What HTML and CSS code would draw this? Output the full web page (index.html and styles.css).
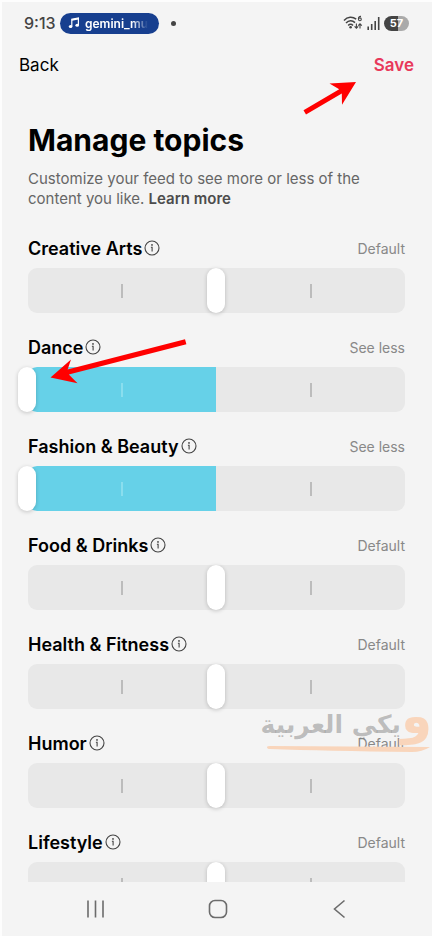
FILE: index.html
```html
<!DOCTYPE html>
<html lang="en">
<head>
<meta charset="utf-8">
<meta name="viewport" content="width=device-width, initial-scale=1">
<title>Manage topics</title>
<link rel="stylesheet" href="styles.css">
</head>
<body>
<svg class="symbols" aria-hidden="true">
  <symbol id="info" viewBox="0 0 16 16">
    <circle cx="8" cy="8" r="7" fill="none" stroke="currentColor" stroke-width="1.1"/>
    <circle cx="8" cy="4.9" r="0.9" fill="currentColor"/>
    <path d="M6.9 7.2H8.1V11.5" fill="none" stroke="currentColor" stroke-width="1.1"/>
  </symbol>
</svg>

<div class="status">
  <span class="clock">9:13</span>
  <span class="pill">
    <svg class="note" viewBox="0 0 12 12" aria-hidden="true">
      <path d="M3.8 9.2V2.2L10.4 1V8" fill="none" stroke="currentColor" stroke-width="1.2"/>
      <path d="M3.8 3L10.4 1.8" stroke="currentColor" stroke-width="1.6"/>
      <ellipse cx="2.6" cy="9.5" rx="1.8" ry="1.5" fill="currentColor"/>
      <ellipse cx="9.2" cy="8.3" rx="1.8" ry="1.5" fill="currentColor"/>
    </svg>
    <span class="pill-text">gemini_mu</span>
  </span>
  <span class="dot"></span>
  <span class="indicators">
    <svg class="wifi" viewBox="0 0 20 16" aria-label="Wi-Fi 6">
      <g fill="none" stroke="currentColor" stroke-width="1.5">
        <path d="M1 5.4C4.6 1.5 9.6 1.5 13.2 4.2"/>
        <path d="M3 8C5.8 5 9.4 5 12 7.6"/>
        <path d="M5.2 10.4C6.6 8.9 8.6 8.9 10 10.4"/>
        <path d="M13.4 8.6V13M11.6 11.3L13.4 13.2L15.2 11.3M17 13.6V9M15.2 10.6L17 8.8L18.8 10.6" stroke-width="1.1"/>
        <path d="M18 1.4C16.4 1.2 15.4 2.2 15.4 4.2" stroke-width="1.1"/>
        <circle cx="16.9" cy="4.3" r="1.4" stroke-width="1.1"/>
      </g>
      <circle cx="7.6" cy="12.3" r="1.3" fill="currentColor"/>
    </svg>
    <svg class="signal" viewBox="0 0 13 13" aria-label="Signal">
      <path d="M1.2 9.5V13M4.7 7V13M8.2 4V13M11.7 0V13" stroke="currentColor" stroke-width="1.6"/>
    </svg>
    <span class="battery">57</span>
  </span>
</div>

<header class="bar">
  <button class="back" type="button">Back</button>
  <button class="save" type="button">Save</button>
</header>

<main class="content">
  <h1>Manage topics</h1>
  <p class="intro">Customize your feed to see more or less of the content you like. <a href="#learn">Learn more</a></p>

  <section class="topic">
    <div class="topic-head"><label for="t1">Creative Arts</label><button class="info" type="button" aria-label="About Creative Arts"><svg><use href="#info"/></svg></button><output for="t1">Default</output></div>
    <div class="slider"><div class="track"><i></i><i></i></div><input id="t1" type="range" min="-2" max="2" value="0"></div>
  </section>
  <section class="topic less">
    <div class="topic-head"><label for="t2">Dance</label><button class="info" type="button" aria-label="About Dance"><svg><use href="#info"/></svg></button><output for="t2">See less</output></div>
    <div class="slider"><div class="track"><i></i><i></i></div><input id="t2" type="range" min="-2" max="2" value="-2"></div>
  </section>
  <section class="topic less">
    <div class="topic-head"><label for="t3">Fashion &amp; Beauty</label><button class="info" type="button" aria-label="About Fashion &amp; Beauty"><svg><use href="#info"/></svg></button><output for="t3">See less</output></div>
    <div class="slider"><div class="track"><i></i><i></i></div><input id="t3" type="range" min="-2" max="2" value="-2"></div>
  </section>
  <section class="topic">
    <div class="topic-head"><label for="t4">Food &amp; Drinks</label><button class="info" type="button" aria-label="About Food &amp; Drinks"><svg><use href="#info"/></svg></button><output for="t4">Default</output></div>
    <div class="slider"><div class="track"><i></i><i></i></div><input id="t4" type="range" min="-2" max="2" value="0"></div>
  </section>
  <section class="topic">
    <div class="topic-head"><label for="t5">Health &amp; Fitness</label><button class="info" type="button" aria-label="About Health &amp; Fitness"><svg><use href="#info"/></svg></button><output for="t5">Default</output></div>
    <div class="slider"><div class="track"><i></i><i></i></div><input id="t5" type="range" min="-2" max="2" value="0"></div>
  </section>
  <section class="topic">
    <div class="topic-head"><label for="t6">Humor</label><button class="info" type="button" aria-label="About Humor"><svg><use href="#info"/></svg></button><output for="t6">Default</output></div>
    <div class="slider"><div class="track"><i></i><i></i></div><input id="t6" type="range" min="-2" max="2" value="0"></div>
  </section>
  <section class="topic">
    <div class="topic-head"><label for="t7">Lifestyle</label><button class="info" type="button" aria-label="About Lifestyle"><svg><use href="#info"/></svg></button><output for="t7">Default</output></div>
    <div class="slider"><div class="track"><i></i><i></i></div><input id="t7" type="range" min="-2" max="2" value="0"></div>
  </section>
</main>

<nav class="system" aria-label="System">
  <button type="button" aria-label="Recent apps"><svg viewBox="0 0 20 20"><path d="M2 1.5V18.5M9.5 1.5V18.5M17 1.5V18.5"/></svg></button>
  <button type="button" aria-label="Home"><svg viewBox="0 0 20 20"><rect x="1.5" y="1.5" width="17" height="17" rx="5.5"/></svg></button>
  <button type="button" aria-label="Go back"><svg viewBox="0 0 20 20"><path d="M14.5 1.5L4.5 10L14.5 18.5"/></svg></button>
</nav>

<svg class="arrows" viewBox="0 0 432 400" aria-hidden="true">
  <path d="M303.5 110.2L339.2 89.2L329.5 83.6L356 82L342 104.8L341.8 93.6L306 114.6Z"/>
  <path d="M185 339.3L67.6 369.5L71 359.5L50.5 377.5L77.5 383.3L68.8 374.4L186.4 344.2Z"/>
</svg>

<div class="watermark" lang="ar" dir="rtl">
  <span class="wm-first">و</span><span class="wm-rest">يكي العربية</span>
  <svg class="wm-line" viewBox="0 0 166 8" preserveAspectRatio="none" aria-hidden="true"><path d="M1 2Q1 1 4 1L164 2Q156 7 146 7Q60 6 4 4Q1 4 1 2Z"/></svg>
</div>
</body>
</html>
```
FILE: styles.css
```css
* { box-sizing: border-box; }

body {
  margin: 0;
  height: 100vh;
  display: flex;
  flex-direction: column;
  position: relative;
  overflow: hidden;
  background: #f4f4f4;
  border-left: 2px solid #fdfdfd;
  border-top: 2px solid #fdfdfd;
  color: #000;
  font-family: Inter, "Liberation Sans", sans-serif;
}

button {
  border: 0;
  padding: 0;
  background: none;
  font: inherit;
  color: inherit;
}

.symbols {
  position: absolute;
  width: 0;
  height: 0;
}

.status {
  display: flex;
  align-items: center;
  height: 42px;
  padding: 0 23px 0 22px;
  color: #444;
}

.clock {
  width: 36px;
  font-size: 16px;
  font-weight: 500;
}

.pill {
  display: flex;
  align-items: center;
  gap: 5px;
  width: 99px;
  height: 21px;
  padding: 0 9px 0 8px;
  border-radius: 11px;
  background: #173f8f;
  color: #fff;
}

.note {
  width: 12px;
  height: 12px;
  flex: none;
}

.pill-text {
  overflow: hidden;
  font-size: 12px;
  font-weight: 600;
  mask-image: linear-gradient(to right, #000 75%, transparent);
}

.dot {
  width: 5px;
  height: 5px;
  margin-left: 12px;
  border-radius: 50%;
  background: #444;
}

.indicators {
  display: flex;
  align-items: center;
  gap: 4px;
  margin-left: auto;
}

.wifi {
  width: 20px;
  height: 16px;
}

.signal {
  width: 13px;
  height: 13px;
}

.battery {
  width: 25px;
  border-radius: 8px;
  background: linear-gradient(to right, #444 57%, #aaa 57%);
  color: #fff;
  font-size: 11px;
  font-weight: 700;
  line-height: 15px;
  text-align: center;
}

.bar {
  display: flex;
  justify-content: space-between;
  align-items: center;
  height: 42px;
  padding: 0 18px 0 17px;
  font-size: 17px;
}

.save {
  color: #e8395b;
  font-weight: 600;
}

.content {
  flex: 1;
  min-height: 0;
  overflow: hidden;
  padding: 34px 27px 0 26px;
}

h1 {
  margin: 0;
  font-size: 30px;
  font-weight: 700;
  line-height: 40px;
}

.intro {
  margin: 9px 0 28px;
  color: #666;
  font-size: 15px;
  line-height: 20px;
}

.intro a {
  color: #4c4c4c;
  font-weight: 600;
  text-decoration: none;
}

.topic {
  height: 99px;
}

.topic-head {
  display: flex;
  align-items: center;
  gap: 2px;
  height: 31px;
  padding-bottom: 9px;
  font-size: 18px;
  font-weight: 600;
}

.info {
  display: flex;
  color: #444;
}

.info svg {
  width: 16px;
  height: 16px;
}

output {
  margin-left: auto;
  color: #888;
  font-size: 14px;
  font-weight: 400;
}

.slider {
  display: grid;
}

.track {
  grid-area: 1 / 1;
  display: flex;
  justify-content: space-around;
  align-items: center;
  height: 45px;
  border-radius: 9px;
  background: #e8e8e8;
}

.track i {
  width: 2px;
  height: 14px;
  background: #bcbcbc;
}

.less .track {
  background: linear-gradient(to right, #66d1e8 50%, #e8e8e8 50%);
}

.less .track i:first-child {
  background: #8adeee;
}

.slider input {
  grid-area: 1 / 1;
  appearance: none;
  height: 45px;
  margin: 0 -9px 0 -10px;
  background: none;
}

.slider input::-webkit-slider-thumb {
  appearance: none;
  width: 18px;
  height: 45px;
  border-radius: 9px;
  background: #fff;
  box-shadow: 0 1px 4px rgba(0, 0, 0, 0.2);
}

.system {
  display: flex;
  justify-content: space-between;
  height: 54px;
  padding: 0 82px 0 84px;
}

.system svg {
  display: block;
  width: 20px;
  height: 20px;
  fill: none;
  stroke: #6c6c6c;
  stroke-width: 1.6;
}

.arrows {
  position: absolute;
  top: -2px;
  left: -2px;
  width: 432px;
  fill: #f00;
  pointer-events: none;
}

.watermark {
  position: absolute;
  top: 694px;
  right: 0;
  display: flex;
  align-items: baseline;
  width: 166px;
  height: 60px;
  font-family: "DejaVu Sans", sans-serif;
  font-weight: 700;
  line-height: 40px;
  white-space: nowrap;
  pointer-events: none;
}

.wm-first {
  color: #f9d5bb;
  font-size: 50px;
}

.wm-rest {
  color: rgba(120, 120, 120, 0.45);
  font-size: 25px;
}

.wm-line {
  position: absolute;
  top: 49px;
  left: 0;
  width: 166px;
  height: 8px;
  fill: #f9d5bb;
}
```
